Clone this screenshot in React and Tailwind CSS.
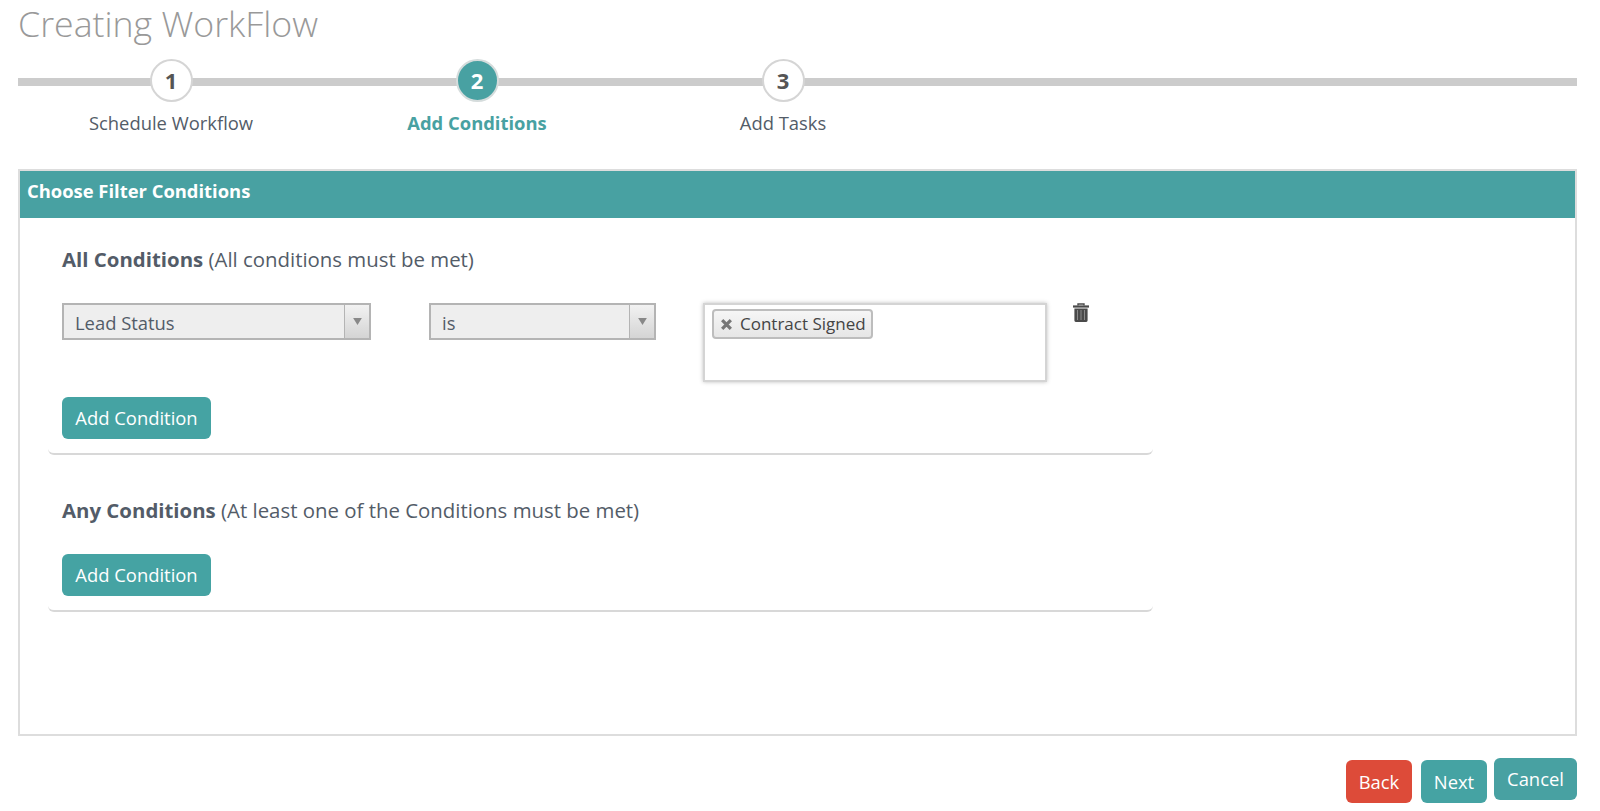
const fontStack = "font-['Open_Sans',sans-serif]";

function Step({ number, label, active }) {
  return (
    <div className="flex w-[306px] flex-col items-center">
      <div
        className={
          active
            ? "flex h-[43px] w-[43px] items-center justify-center rounded-full border-2 border-[#d5dcdc] bg-[#48a1a2] text-[22px] font-bold text-white"
            : "flex h-[43px] w-[43px] items-center justify-center rounded-full border-2 border-[#d5d5d5] bg-white text-[22px] font-bold text-[#555]"
        }
      >
        {number}
      </div>
      <p
        className={
          active
            ? "mt-[7px] text-[18.4px] leading-[28px] font-bold text-[#48a1a2]"
            : "mt-[7px] text-[18.4px] leading-[28px] text-[#535c68]"
        }
      >
        {label}
      </p>
    </div>
  );
}

function Select({ value, width }) {
  return (
    <div className={`flex h-[37px] ${width} border-2 border-[#b4b4b4] bg-[#eeeeee]`}>
      <div className="flex-1 pl-[11px] text-[18.4px] leading-[35px] text-[#535c68]">{value}</div>
      <div className="flex w-[25px] items-center justify-center border-l border-[#b4b4b4] bg-gradient-to-b from-[#f2f2f2] to-[#d4d4d4]">
        <svg width="9" height="7" viewBox="0 0 10 8">
          <path d="M0 0h10L5 8z" fill="#888" />
        </svg>
      </div>
    </div>
  );
}

function Button({ children, className }) {
  return <button className={`rounded-[6px] text-[18.4px] text-white ${className}`}>{children}</button>;
}

function TrashIcon() {
  return (
    <svg width="16" height="19" viewBox="0 0 16 19">
      <path d="M5 2.6V1h6v1.6" fill="none" stroke="#4a4a4a" strokeWidth="1.4" />
      <rect x="0" y="2.4" width="16" height="2.2" fill="#4a4a4a" />
      <path
        d="M1.4 5.4h13.2V17.6a1.4 1.4 0 0 1-1.4 1.4H2.8a1.4 1.4 0 0 1-1.4-1.4z"
        fill="#4a4a4a"
      />
      <path d="M4.5 7v10M8 7v10M11.5 7v10" stroke="#8a8a8a" strokeWidth="1" />
    </svg>
  );
}

function ConditionGroup({ title, note, children }) {
  return (
    <div className="w-[1105px] rounded-b-[6px] border-b-2 border-[#d8d8d8] pr-[13px] pb-[14px] pl-[14px]">
      <p className="mb-[2px] text-[20.4px] leading-[26px] text-[#535c68]">
        <span className="font-bold">{title}</span> {note}
      </p>
      {children}
      <Button className="h-[42px] w-[149px] bg-[#45a3a3]">Add Condition</Button>
    </div>
  );
}

export default function App() {
  return (
    <div className={`h-[811px] overflow-hidden bg-white px-[18px] ${fontStack}`}>
      <h1 className="pt-[1px] text-[35.7px] leading-[45px] font-light text-[#999]">Creating WorkFlow</h1>

      <div className="relative mt-[13px]">
        <div className="absolute top-[19px] right-[5px] left-0 h-[8px] bg-[#cccccc]" />
        <div className="relative flex">
          <Step number="1" label="Schedule Workflow" />
          <Step number="2" label="Add Conditions" active />
          <Step number="3" label="Add Tasks" />
        </div>
      </div>

      <div className="mt-[32px] mr-[5px] h-[567px] border-2 border-[#dddddd]">
        <div className="h-[47px] bg-[#48a1a2] pl-[7px] text-[18.4px] leading-[40px] font-bold text-white">
          Choose Filter Conditions
        </div>

        <div className="pt-[28px] pl-[28px]">
          <ConditionGroup title="All Conditions" note="(All conditions must be met)">
            <div className="mt-[31px] mb-[15px] flex h-[79px] items-start">
              <Select value="Lead Status" width="w-[309px]" />
              <div className="w-[58px]" />
              <Select value="is" width="w-[227px]" />
              <div className="ml-[47px] h-[79px] w-[344px] border-2 border-[#d4d4d4] bg-white pt-[4px] pl-[7px] shadow-[0_0_4px_rgba(0,0,0,0.25)]">
                <div className="flex h-[30px] w-[161px] items-center rounded-[4px] border-2 border-[#bdbdbd] bg-gradient-to-b from-[#f6f6f6] to-[#e6e6e6] pl-[6px] text-[17px] whitespace-nowrap text-[#444]">
                  <svg width="13" height="13" viewBox="0 0 12 12" className="mr-[7px]">
                    <path d="M2 2l8 8M10 2l-8 8" stroke="#777" strokeWidth="3" />
                  </svg>
                  Contract Signed
                </div>
              </div>
              <div className="ml-[26px]">
                <TrashIcon />
              </div>
            </div>
          </ConditionGroup>

          <div className="mt-[42px]">
            <ConditionGroup title="Any Conditions" note="(At least one of the Conditions must be met)">
              <div className="h-[29px]" />
            </ConditionGroup>
          </div>
        </div>
      </div>

      <div className="mt-[22px] mr-[5px] flex items-start justify-end">
        <Button className="mt-[2px] h-[43px] w-[66px] bg-[#dd4b39]">Back</Button>
        <Button className="mt-[2px] ml-[9px] h-[43px] w-[66px] bg-[#45a3a3]">Next</Button>
        <Button className="ml-[7px] h-[42px] w-[83px] bg-[#48a1a2]">Cancel</Button>
      </div>
    </div>
  );
}
